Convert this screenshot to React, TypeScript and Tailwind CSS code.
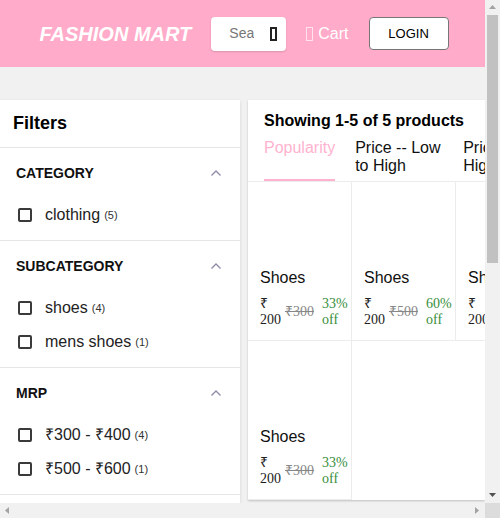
import React from 'react';

type Option = { label: string; count: number };
type Section = { title: string; options: Option[] };

const sections: Section[] = [
  { title: 'CATEGORY', options: [{ label: 'clothing', count: 5 }] },
  {
    title: 'SUBCATEGORY',
    options: [
      { label: 'shoes', count: 4 },
      { label: 'mens shoes', count: 1 },
    ],
  },
  {
    title: 'MRP',
    options: [
      { label: '₹300 - ₹400', count: 4 },
      { label: '₹500 - ₹600', count: 1 },
    ],
  },
  {
    title: 'DISCOUNT',
    options: [
      { label: '30% - 40%', count: 4 },
      { label: '60% - 70%', count: 1 },
    ],
  },
];

type Product = { name: string; price: number; mrp: number; off: number };

const products: Product[] = [
  { name: 'Shoes', price: 200, mrp: 300, off: 33 },
  { name: 'Shoes', price: 200, mrp: 500, off: 60 },
  { name: 'Shoes', price: 200, mrp: 300, off: 33 },
  { name: 'Shoes', price: 200, mrp: 300, off: 33 },
  { name: 'Shoes', price: 200, mrp: 300, off: 33 },
];

const tabs = ['Popularity', 'Price -- Low to High', 'Price -- High to Low', 'Newest First'];

function Chevron() {
  return (
    <svg width="12" height="8" viewBox="0 0 12 8" className="mr-[2px]">
      <path d="M1.5 6.5 L6 2 L10.5 6.5" fill="none" stroke="#8c8ca8" strokeWidth="1.3" />
    </svg>
  );
}

// little triangles for the scrollbar buttons
function Arrow({ dir, color }: { dir: 'up' | 'down' | 'left' | 'right'; color: string }) {
  const pts = {
    up: '1,6 4.5,2 8,6',
    down: '1,2 4.5,6 8,2',
    left: '6,1 2,4.5 6,8',
    right: '2,1 6,4.5 2,8',
  }[dir];
  return (
    <svg width="9" height="9" viewBox="0 0 9 9">
      <polygon points={pts} fill={color} />
    </svg>
  );
}

function Header() {
  return (
    <header className="h-[67px] bg-[#ffabc9] flex items-center justify-center gap-5">
      <div className="ml-[3px] text-[20px] font-bold italic text-white">FASHION MART</div>
      <div className="w-[75px] h-[34px] bg-white rounded-[4px] shadow-[0_1px_2px_rgba(0,0,0,0.15)] flex items-center">
        <input
          placeholder="Search"
          className="w-[43px] pl-[18px] text-[14px] bg-transparent outline-none placeholder:text-[#777]"
        />
        <span className="ml-[16px] w-[7px] h-[14px] border-2 border-[#222]" />
      </div>
      <div className="flex items-center text-white text-[16px]">
        <span className="w-[7px] h-[14px] border-[1.5px] border-[#ffe4ee]" />
        <span className="ml-[5px]">Cart</span>
      </div>
      <button className="w-[80px] h-[33px] bg-white border border-[#767676] rounded-[4px] text-[13px] text-black">
        LOGIN
      </button>
    </header>
  );
}

function Filters() {
  return (
    <aside className="w-[240px] shrink-0 bg-white shadow-[0_1px_3px_rgba(0,0,0,0.12)]">
      <div className="px-[13px] py-3 text-[18px] leading-[23px] font-bold text-black border-b border-[#e6e6e6]">
        Filters
      </div>
      {sections.map((s) => (
        <div key={s.title} className="px-4 pt-[15px] pb-2 border-b border-[#e6e6e6]">
          <div className="h-5 flex items-center justify-between">
            <span className="text-[14px] font-bold text-[#111]">{s.title}</span>
            <Chevron />
          </div>
          <div className="mt-[15px]">
            {s.options.map((o) => (
              <div key={o.label} className="h-[34px] flex items-center">
                <span className="ml-0.5 w-[14px] h-[14px] border-2 border-[#3a3a3a] rounded-[2px]" />
                <span className="ml-[13px] text-[16px] text-[#222]">{o.label}</span>
                <span className="ml-1 text-[11px] text-[#333]">({o.count})</span>
              </div>
            ))}
          </div>
        </div>
      ))}
    </aside>
  );
}

function ProductCard({ p }: { p: Product }) {
  return (
    <div className="h-[159px] border-r border-b border-[#ececec] px-3 pb-[12px] flex flex-col justify-end">
      <div className="text-[16px] leading-5 text-[#111]">{p.name}</div>
      <div className="mt-2 flex items-center font-['Liberation_Serif',serif] text-[14px] leading-4">
        <span className="w-[21px] text-[#212121]">₹ {p.price}</span>
        <span className="ml-1 whitespace-nowrap text-[#878787] line-through">₹{p.mrp}</span>
        <span className="ml-2 w-[27px] text-[#388e3c]">{p.off}% off</span>
      </div>
    </div>
  );
}

function Products() {
  return (
    <section className="flex-1 min-w-0 overflow-hidden bg-white shadow-[0_1px_2px_rgba(0,0,0,0.2)]">
      <div className="px-4 pt-[11px] text-[16px] leading-5 font-bold text-black">
        Showing 1-5 of 5 products
      </div>
      <div className="mt-[8px] flex gap-5 px-4 border-b border-[#ececec]">
        {tabs.map((t, i) => (
          <div
            key={t}
            className={
              i === 0
                ? 'shrink-0 pb-[4px] border-b-2 border-[#ffb3cf] text-[16px] leading-[18px] text-[#ffb3cf]'
                : 'shrink-0 w-[88px] pb-[4px] border-b-2 border-transparent text-[16px] leading-[18px] text-[#111]'
            }
          >
            {t}
          </div>
        ))}
      </div>
      <div className="grid grid-cols-[repeat(4,104px)] w-[416px]">
        {products.map((p, i) => (
          <ProductCard key={i} p={p} />
        ))}
      </div>
    </section>
  );
}

export default function App() {
  return (
    <div className="h-[518px] w-[500px] grid grid-cols-[485px_15px] grid-rows-[503px_15px] overflow-hidden bg-[#f1f1f1] font-['Liberation_Sans',Arial,sans-serif]">
      <div className="overflow-hidden">
        <Header />
        <div className="pt-[33px] flex items-start gap-2">
          <Filters />
          <Products />
        </div>
      </div>

      {/* vertical scrollbar */}
      <div className="flex flex-col bg-[#f1f1f1]">
        <div className="h-[15px] flex items-center justify-center">
          <Arrow dir="up" color="#a3a3a3" />
        </div>
        <div className="flex-1">
          <div className="mx-[2px] h-[248px] bg-[#c1c1c1]" />
        </div>
        <div className="h-[15px] flex items-center justify-center">
          <Arrow dir="down" color="#505050" />
        </div>
      </div>

      {/* horizontal scrollbar */}
      <div className="flex items-center justify-between bg-[#f1f1f1]">
        <div className="w-[15px] flex justify-center">
          <Arrow dir="left" color="#a3a3a3" />
        </div>
        <div className="w-[15px] flex justify-center">
          <Arrow dir="right" color="#a3a3a3" />
        </div>
      </div>
      <div className="bg-[#dcdcdc]" />
    </div>
  );
}
